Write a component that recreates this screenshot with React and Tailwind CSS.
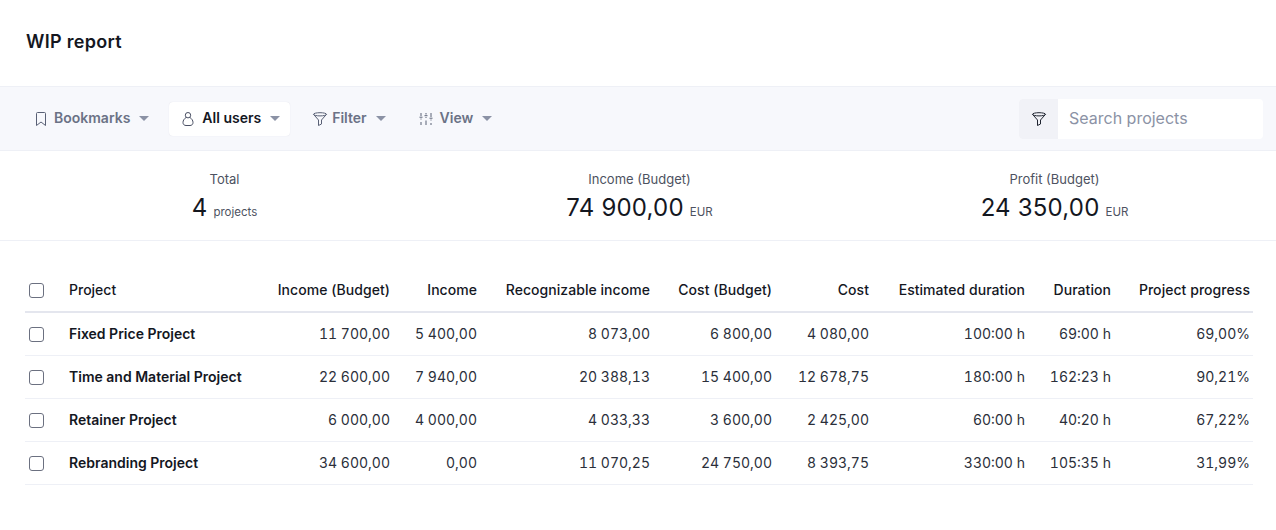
const rows = [
  ["Fixed Price Project", "11 700,00", "5 400,00", "8 073,00", "6 800,00", "4 080,00", "100:00 h", "69:00 h", "69,00%"],
  ["Time and Material Project", "22 600,00", "7 940,00", "20 388,13", "15 400,00", "12 678,75", "180:00 h", "162:23 h", "90,21%"],
  ["Retainer Project", "6 000,00", "4 000,00", "4 033,33", "3 600,00", "2 425,00", "60:00 h", "40:20 h", "67,22%"],
  ["Rebranding Project", "34 600,00", "0,00", "11 070,25", "24 750,00", "8 393,75", "330:00 h", "105:35 h", "31,99%"],
];
const headers = ["Income (Budget)", "Income", "Recognizable income", "Cost (Budget)", "Cost", "Estimated duration", "Duration", "Project progress"];

const Caret = () => <span className="ml-[9px] w-0 h-0 border-x-[5px] border-x-transparent border-t-[5px] border-t-[#8b92a5]" />;

const BookmarkIcon = () => (
  <svg width="16" height="16" viewBox="0 0 16 16" fill="none" stroke="#596075" strokeWidth="1">
    <path d="M3.5 2.5a1 1 0 0 1 1-1h7a1 1 0 0 1 1 1v12L8 11l-4.500 3.500z" strokeLinejoin="round" />
  </svg>
);
const UserIcon = () => (
  <svg width="16" height="16" viewBox="0 0 16 16" fill="none" stroke="#4a5064" strokeWidth="1">
    <circle cx="8" cy="4.200" r="2.700" />
    <path d="M6 6.500C4.200 7.800 3 9.500 3 11.500c0 1.800 1.200 3 3 3h4c1.800 0 3-1.200 3-3 0-2-1.200-3.700-3-5" />
  </svg>
);
const FunnelIcon = ({ color = "#596075" }) => (
  <svg width="16" height="16" viewBox="0 0 16 16" fill="none" stroke={color} strokeWidth="1" strokeLinejoin="round">
    <ellipse cx="8" cy="3.300" rx="6.500" ry="1.600" />
    <path d="M1.500 3.300 6.500 9v5.500l3-1.500V9l5-5.700" />
  </svg>
);
const SlidersIcon = () => (
  <svg width="14" height="14" viewBox="0 0 14 14" fill="none" stroke="#596075" strokeWidth="1">
    <path d="M2 1v3M2 6.500v1M2 10v3M7 1v1.500M7 5v1M7 8.500v4.500M12 1v4M12 7.500v1M12 11v2M0.500 5.200h3M5.500 3.700h3M10.500 6.200h3" />
  </svg>
);
const Box = () => <span className="block relative top-px w-[15px] h-[15px] rounded-[3px] border border-[#6b7080] bg-white" />;

function ToolButton({ icon, label, active, gap = "ml-[5px]", className = "" }) {
  return (
    <div className={`flex items-center h-[34px] rounded ${active ? "bg-white text-[#14171f] shadow-[0_0_1px_rgba(40,50,80,0.15)]" : "text-[#6b7286]"} ${className}`}>
      {icon}
      <span className={`${gap} text-sm font-semibold relative -top-px`}>{label}</span>
      <Caret />
    </div>
  );
}

function Stat({ label, value, unit }) {
  return (
    <div className="flex flex-col items-center">
      <div className="text-[13px] leading-4 text-[#4d5261]">{label}</div>
      <div className="mt-[5px] flex items-baseline h-[32px] text-[#14171f]">
        <span className="text-2xl tracking-[0.2px] leading-8">{value}</span>
        <span className="ml-[6px] text-[11.5px] text-[#4d5261]">{unit}</span>
      </div>
    </div>
  );
}

export default function App() {
  return (
    <div className="w-[1276px] h-[530px] overflow-hidden bg-white text-[#14171f] font-['Inter',sans-serif]">
      <header className="h-[87px] flex items-start pl-[26px] pt-[29px] border-b border-[#eef0f6]">
        <h1 className="text-lg leading-[26px] font-semibold tracking-[0.3px]">WIP report</h1>
      </header>

      <div className="h-[64px] bg-[#f7f8fc] border-b border-[#eef0f6] flex items-center pl-[33px] pr-[13px]">
        <ToolButton icon={<BookmarkIcon />} label="Bookmarks" gap="ml-[5px]" />
        <ToolButton icon={<UserIcon />} label="All users" gap="ml-[6px]" active className="ml-[20px] pl-[11px] pr-[10px]" />
        <ToolButton icon={<FunnelIcon />} label="Filter" gap="ml-[4px]" className="ml-[22px]" />
        <ToolButton icon={<SlidersIcon />} label="View" gap="ml-[7px]" className="ml-[33px]" />
        <div className="ml-auto flex h-[40px] w-[244px] rounded overflow-hidden bg-white">
          <div className="w-[39px] bg-[#f1f2f7] flex items-center justify-center">
            <FunnelIcon color="#1f2430" />
          </div>
          <div className="flex-1 pl-[11px] text-base leading-[39px] text-[#8b92a5]">Search projects</div>
        </div>
      </div>

      <section className="h-[90px] border-b border-[#eef0f6] grid grid-cols-3 pl-[17px] pr-[14px] pt-[20px] content-start">
        <Stat label="Total" value="4" unit="projects" />
        <Stat label="Income (Budget)" value="74 900,00" unit="EUR" />
        <Stat label="Profit (Budget)" value="24 350,00" unit="EUR" />
      </section>

      <div className="pl-[25px] pr-[23px] pt-[27px]">
        <table className="w-[1228px] table-fixed border-collapse text-sm">
          <colgroup>
            <col className="w-[44px]" />
            <col className="w-[181px]" />
            <col className="w-[140px]" />
            <col className="w-[87px]" />
            <col className="w-[173px]" />
            <col className="w-[122px]" />
            <col className="w-[97px]" />
            <col className="w-[156px]" />
            <col className="w-[86px]" />
            <col className="w-[142px]" />
          </colgroup>
          <thead>
            <tr className="h-[44px] border-b-2 border-[#e4e6ee]">
              <th className="pl-[4px]"><Box /></th>
              <th className="text-left font-medium">Project</th>
              {headers.map((h, i) => (
                <th key={h} className={`text-right font-medium tracking-[0.05px] whitespace-nowrap ${i === 7 ? "pr-[3px]" : ""}`}>{h}</th>
              ))}
            </tr>
          </thead>
          <tbody>
            {rows.map(r => (
              <tr key={r[0]} className="h-[43px] border-b border-[#eef0f6]">
                <td className="pl-[4px]"><Box /></td>
                <td className="font-semibold whitespace-nowrap">{r[0]}</td>
                {r.slice(1).map((v, i) => (
                  <td key={i} className={`text-right text-[#2b2f3a] tabular-nums ${i === 7 ? "pr-[3px]" : ""}`}>{v}</td>
                ))}
              </tr>
            ))}
          </tbody>
        </table>
      </div>
    </div>
  );
}
